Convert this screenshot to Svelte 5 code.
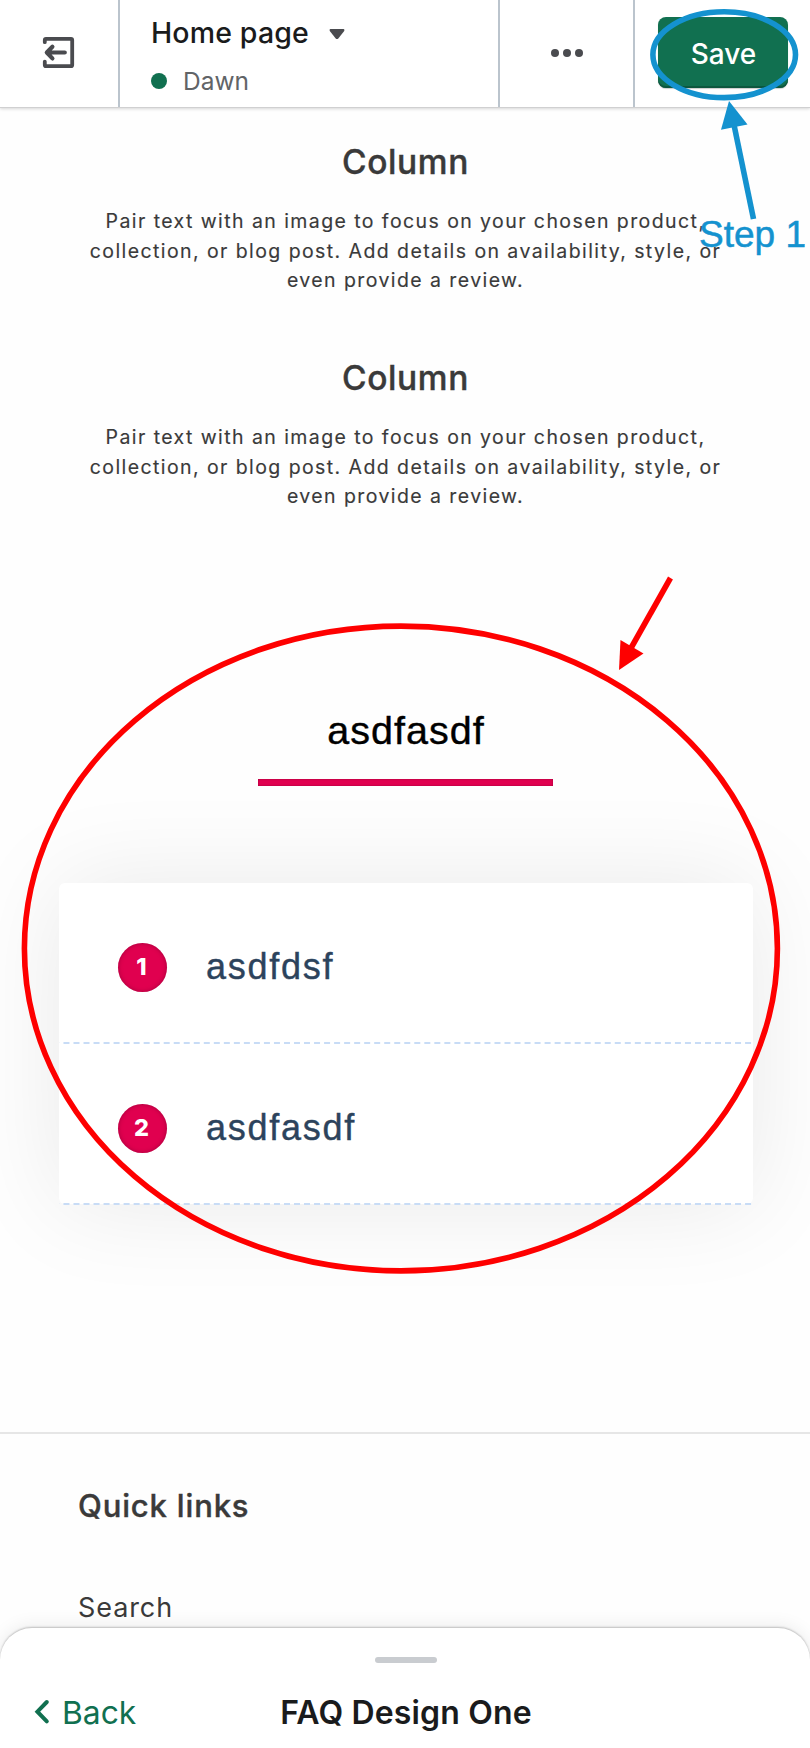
<script>
  const columns = [1, 2];
  const questions = ['asdfdsf', 'asdfasdf'];
</script>

<div class="page">
  <header>
    <div class="cell exit">
      <svg width="34" height="34" viewBox="0 0 34 34" fill="none" stroke="#4a4b4f" stroke-width="3.8" stroke-linecap="round" stroke-linejoin="round">
        <path d="M2.8 6.2V4Q2.8 2.8 4 2.8H29Q30.2 2.8 30.2 4V29Q30.2 30.2 29 30.2H4Q2.8 30.2 2.8 29V25.6" />
        <path d="M22.8 16.5H5M10.4 10.8L4.8 16.5L10.4 22.4" stroke-width="4.2" />
      </svg>
    </div>
    <div class="cell theme">
      <div class="title"><span class="home">Home page</span>
        <svg width="16" height="11" viewBox="0 0 16 11"><path d="M1.3 0H14.7Q16 .6 15.2 2L9.3 9.4Q8 10.6 6.7 9.4L.8 2Q0 .6 1.3 0Z" fill="#4a4b4f" /></svg>
      </div>
      <div class="status"><i></i><span class="dawn">Dawn</span></div>
    </div>
    <div class="cell more"><i></i><i></i><i></i></div>
    <div class="cell action"><button><span>Save</span></button></div>
  </header>

  <main>
    {#each columns as column (column)}
      <section class="column">
        <h3>Column</h3>
        <p>Pair text with an image to focus on your chosen product,<br />collection, or blog post. Add details on availability, style, or<br />even provide a review.</p>
      </section>
    {/each}

    <section class="faq">
      <h2>asdfasdf</h2>
      <div class="rule"></div>
      <div class="card">
        {#each questions as question, i}
          <div class="row"><b>{i + 1}</b><span>{question}</span></div>
        {/each}
      </div>
    </section>
  </main>

  <footer>
    <h4>Quick links</h4>
    <a href="#search">Search</a>
  </footer>

  <div class="sheet">
    <div class="handle"></div>
    <nav>
      <div class="back">
        <svg width="16" height="26" viewBox="0 0 16 26" fill="none" stroke="#117050" stroke-width="4" stroke-linecap="round" stroke-linejoin="miter"><path d="M12.8 3L3.4 12.7L12.8 22.4" /></svg>
        <span>Back</span>
      </div>
      <strong>FAQ Design One</strong>
    </nav>
  </div>

  <svg class="marks" width="810" height="1748" viewBox="0 0 810 1748">
    <g fill="none" stroke="#1492cf" stroke-width="5.6">
      <ellipse cx="724.2" cy="54.7" rx="71.3" ry="42.9" />
      <path d="M753.5 219L733 120" />
    </g>
    <path d="M729 101L747.5 124.5L721 129.7Z" fill="#1492cf" />
    <g fill="none" stroke="#fe0000" stroke-width="5.6">
      <ellipse cx="400.9" cy="948.5" rx="376.5" ry="322.4" />
      <path d="M670.5 578L631 648" />
    </g>
    <path d="M619 670L620.5 640L643.5 653.5Z" fill="#fe0000" />
  </svg>
  <div class="step">Step 1</div>
</div>

<style>
  :global(body) { margin: 0; background: #fefefe; }
  .page { position: relative; width: 810px; height: 1748px; overflow: hidden; background: #fefefe; font-family: Inter, sans-serif; color: #3a3a3a; display: flex; flex-direction: column; }
  h2, h3, h4, p { margin: 0; }
  header { box-sizing: border-box; height: 108px; flex: none; display: flex; border-bottom: 1px solid #d0d0d1; box-shadow: 0 1px 3px rgba(0, 0, 0, .16); background: #fff; }
  .cell { box-sizing: border-box; display: flex; border-right: 2px solid #bbc4cd; }
  .exit { width: 120px; padding: 36px 0 0 42px; }
  .theme { width: 380px; padding: 14px 0 0 31px; flex-direction: column; }
  .title { display: flex; align-items: center; height: 40px; gap: 20px; }
  .home { font-size: 28.5px; line-height: 34px; padding-bottom: 2px; font-weight: 500; color: #1a1b1c; letter-spacing: .15px; }
  .status { display: flex; align-items: center; height: 30px; margin-top: 12px; gap: 16px; }
  .status i { width: 16px; height: 16px; border-radius: 50%; background: #117050; }
  .dawn { font-size: 24.5px; color: #616467; }
  .more { width: 135px; padding: 49px 0 0 51px; gap: 4px; }
  .more i { width: 8px; height: 8px; border-radius: 50%; background: #4a4b4f; }
  .action { flex: 1; border: 0; padding: 17px 0 0 23px; }
  button { width: 130px; height: 71px; padding: 2px 0 0 1px; border: 0; border-radius: 8px; background: #117050; box-shadow: inset 0 -2px 0 #0d573e, 0 1px 1px rgba(0,0,0,.2); color: #fff; font: 500 28px Inter, sans-serif; }
  .column { height: 216px; box-sizing: border-box; padding: 34px 0 0 1px; text-align: center; }
  h3 { font-size: 33.5px; line-height: 40px; font-weight: 500; letter-spacing: .6px; -webkit-text-stroke: .4px #3a3a3a; }
  p { margin-top: 25px; font-size: 19.5px; line-height: 29.5px; letter-spacing: 1.42px; -webkit-text-stroke: .15px #3a3a3a; }
  .faq { display: flex; flex-direction: column; align-items: center; padding-top: 167px; font-family: "Liberation Sans", sans-serif; }
  h2 { font-size: 39.5px; line-height: 46px; font-weight: 400; color: #000; letter-spacing: 1px; padding-left: 2px; -webkit-text-stroke: .4px #000; }
  .rule { width: 295px; height: 7px; margin-top: 26px; margin-left: 1px; background: #e0004f; box-shadow: inset 0 0 2px rgba(100,0,40,.6); }
  .card { width: 694px; height: 321px; margin: 97px 0 0 2px; border-radius: 6px; background: #fff; box-shadow: 0 0 100px rgba(0,0,0,.085); }
  .row { box-sizing: border-box; height: 161px; padding: 10px 0 0 59px; display: flex; align-items: center; gap: 39px; border-bottom: 2px dashed #c8dcf6; border-radius: 2px; }
  .row b { width: 49px; height: 49px; border-radius: 50%; background: #e0004f; box-shadow: inset 0 0 4px rgba(100,0,40,.5); color: #fff; font: 800 23.5px/48px Inter, sans-serif; text-align: center; text-indent: -2px; }
  .row span { font-size: 36px; padding-bottom: 1px; letter-spacing: 1.75px; color: #2c435c; -webkit-text-stroke: .4px #2c435c; }
  footer { position: absolute; top: 1432px; left: 0; right: 0; border-top: 2px solid #e6e6e6; padding: 52px 78px 0; }
  h4 { font-size: 31px; line-height: 40px; font-weight: 500; letter-spacing: .85px; -webkit-text-stroke: .4px #3a3a3a; }
  footer a { display: block; margin-top: 64px; color: #3a3a3a; text-decoration: none; font-size: 27px; line-height: 36px; letter-spacing: .9px; }
  .sheet { position: absolute; left: 0; right: 0; top: 1628px; height: 120px; border-radius: 32px 32px 0 0; background: #fff; box-shadow: 0 -1px 2px rgba(0,0,0,.22), 0 -2px 18px rgba(0,0,0,.08); }
  .handle { width: 62px; height: 6px; border-radius: 3px; background: #c9ccd0; margin: 29px auto 0; position: relative; left: 1px; }
  nav { position: relative; display: flex; justify-content: center; align-items: center; height: 44px; margin-top: 27px; }
  .back { position: absolute; left: 34px; display: flex; align-items: center; gap: 12px; color: #117050; font-size: 31.8px; }
  strong { font-size: 32px; font-weight: 600; color: #1a1b1c; letter-spacing: .15px; padding-left: 2px; }
  .marks { position: absolute; left: 0; top: 0; }
  .step { position: absolute; left: 699px; top: 214px; font: 37px/42px "Liberation Sans", sans-serif; color: #1492cf; -webkit-text-stroke: .5px #1492cf; white-space: nowrap; }
</style>
